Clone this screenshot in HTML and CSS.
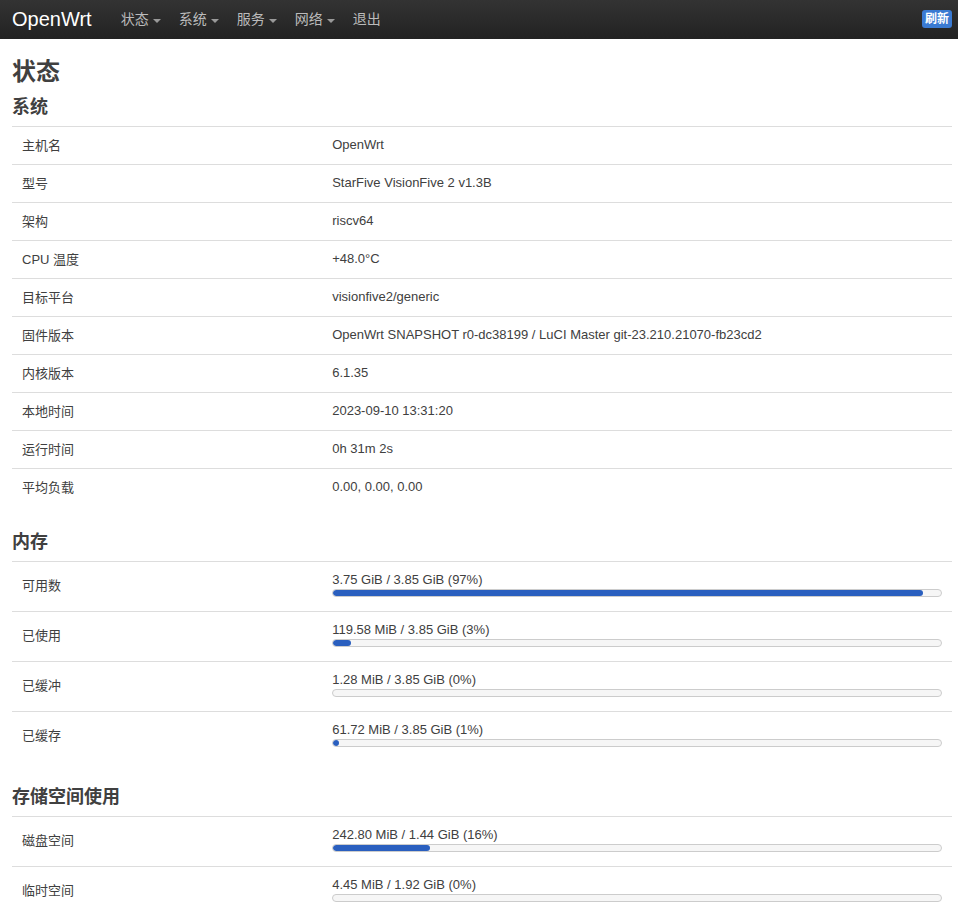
FILE: index.html
```html
<!DOCTYPE html>
<html lang="zh-CN">
<head>
<meta charset="utf-8">
<title>OpenWrt - 状态</title>
<link rel="stylesheet" href="styles.css">
</head>
<body>
<header class="topbar">
  <a class="brand" href="#">OpenWrt</a>
  <nav class="nav">
    <a class="nav-item" href="#">状态<span class="caret"></span></a>
    <a class="nav-item" href="#">系统<span class="caret"></span></a>
    <a class="nav-item" href="#">服务<span class="caret"></span></a>
    <a class="nav-item" href="#">网络<span class="caret"></span></a>
    <a class="nav-item" href="#">退出</a>
  </nav>
  <span class="badge">刷新</span>
</header>
<main class="main">
  <h2 class="page-title">状态</h2>

  <h3 class="section-title">系统</h3>
  <div class="table">
    <div class="tr"><div class="td left">主机名</div><div class="td">OpenWrt</div></div>
    <div class="tr"><div class="td left">型号</div><div class="td">StarFive VisionFive 2 v1.3B</div></div>
    <div class="tr"><div class="td left">架构</div><div class="td">riscv64</div></div>
    <div class="tr"><div class="td left">CPU 温度</div><div class="td">+48.0°C</div></div>
    <div class="tr"><div class="td left">目标平台</div><div class="td">visionfive2/generic</div></div>
    <div class="tr"><div class="td left">固件版本</div><div class="td">OpenWrt SNAPSHOT r0-dc38199 / LuCI Master git-23.210.21070-fb23cd2</div></div>
    <div class="tr"><div class="td left">内核版本</div><div class="td">6.1.35</div></div>
    <div class="tr"><div class="td left">本地时间</div><div class="td">2023-09-10 13:31:20</div></div>
    <div class="tr"><div class="td left">运行时间</div><div class="td">0h 31m 2s</div></div>
    <div class="tr"><div class="td left">平均负载</div><div class="td">0.00, 0.00, 0.00</div></div>
  </div>

  <h3 class="section-title">内存</h3>
  <div class="table">
    <div class="tr tall"><div class="td left">可用数</div><div class="td"><div class="bar-title">3.75 GiB / 3.85 GiB (97%)</div><div class="bar"><div class="fill" style="width:97%"></div></div></div></div>
    <div class="tr tall"><div class="td left">已使用</div><div class="td"><div class="bar-title">119.58 MiB / 3.85 GiB (3%)</div><div class="bar"><div class="fill" style="width:3%"></div></div></div></div>
    <div class="tr tall"><div class="td left">已缓冲</div><div class="td"><div class="bar-title">1.28 MiB / 3.85 GiB (0%)</div><div class="bar"><div class="fill" style="width:0%"></div></div></div></div>
    <div class="tr tall"><div class="td left">已缓存</div><div class="td"><div class="bar-title">61.72 MiB / 3.85 GiB (1%)</div><div class="bar"><div class="fill" style="width:1%"></div></div></div></div>
  </div>

  <h3 class="section-title">存储空间使用</h3>
  <div class="table">
    <div class="tr tall"><div class="td left">磁盘空间</div><div class="td"><div class="bar-title">242.80 MiB / 1.44 GiB (16%)</div><div class="bar"><div class="fill" style="width:16%"></div></div></div></div>
    <div class="tr tall"><div class="td left">临时空间</div><div class="td"><div class="bar-title">4.45 MiB / 1.92 GiB (0%)</div><div class="bar"><div class="fill" style="width:0%"></div></div></div></div>
  </div>
</main>
</body>
</html>
```

FILE: styles.css
```css
* { box-sizing: border-box; }
html, body { margin: 0; padding: 0; background: #fff; }
body {
  font-family: "Liberation Sans", Arial, "Noto Sans CJK SC", sans-serif;
  font-size: 13px;
  color: #404040;
  overflow: hidden;
}
.topbar {
  height: 39px;
  background: linear-gradient(#333333, #222222);
  display: flex;
  align-items: center;
  padding: 0 6px 0 12px;
}
.brand {
  color: #ffffff;
  font-size: 20px;
  text-decoration: none;
  padding-right: 20px;
  line-height: 39px;
}
.nav { display: flex; flex: 1; }
.nav-item {
  color: #bbbbbb;
  font-size: 14px;
  text-decoration: none;
  padding: 0 9px;
  line-height: 39px;
  display: flex;
  align-items: center;
}
.caret {
  display: inline-block;
  width: 0; height: 0;
  margin-left: 4px;
  margin-top: 2px;
  border-left: 4px solid transparent;
  border-right: 4px solid transparent;
  border-top: 4px solid #999999;
}
.badge {
  background: #3a7ad2;
  color: #ffffff;
  font-weight: bold;
  font-size: 12px;
  line-height: 18px;
  padding: 0 3px;
  border-radius: 3px;
  margin-top: -2px;
}
.main { padding: 0 6px 0 12px; }
.page-title {
  margin: 15px 0 0;
  font-size: 24px;
  line-height: 36px;
  font-weight: bold;
}
.section-title {
  margin: 4px 0 6px;
  font-size: 18px;
  line-height: 26px;
  font-weight: bold;
}
.table + .section-title { margin-top: 23px; }
.table { width: 100%; }
.tr {
  display: flex;
  height: 38px;
  border-top: 1px solid #dddddd;
  align-items: center;
  padding-bottom: 2px;
}
.tr.tall { height: 50px; padding-bottom: 5px; }
.td { padding: 0 10px; flex: 1; }
.td.left { flex: 0 0 33%; }
.bar-title { line-height: 15px; }
.bar {
  height: 8px;
  border: 1px solid #cccccc;
  background: #f6f6f6;
  border-radius: 4px;
  margin-top: 2px;
  overflow: hidden;
}
.fill {
  height: 100%;
  background: #2a5fbf;
  border-radius: 3px;
}
```
